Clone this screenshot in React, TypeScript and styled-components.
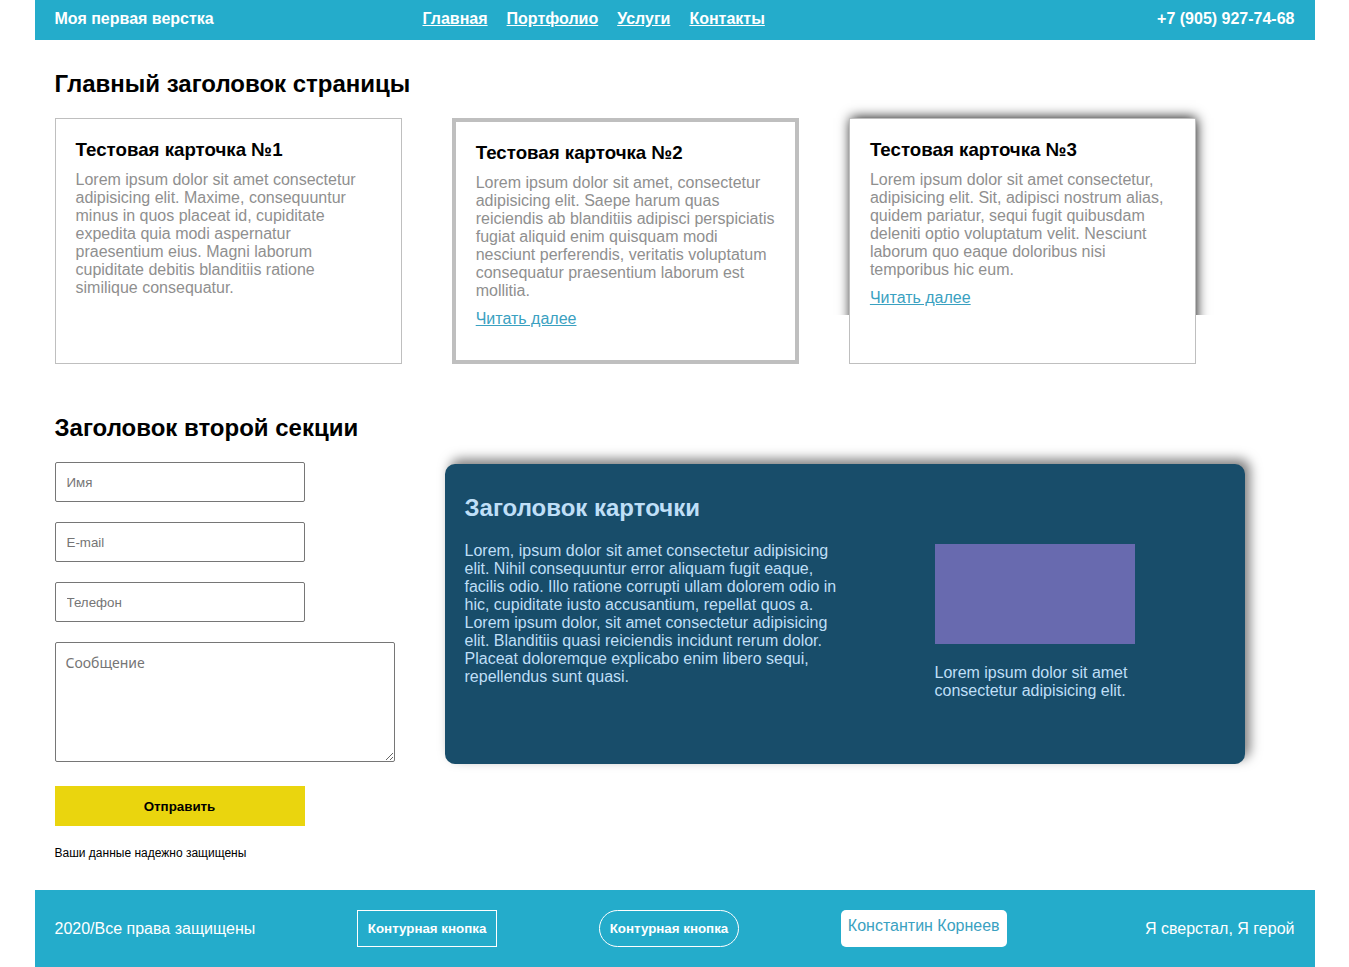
import React from "react";
import styled, { createGlobalStyle, css } from "styled-components";

const sans = `"Liberation Sans", Arial, sans-serif`;
const accent = "#24accb";

const GlobalStyle = createGlobalStyle`
  *, *::before, *::after { box-sizing: border-box; }
  body {
    margin: 0;
    background: #fff;
    color: #000;
    font-family: ${sans};
    font-size: 16px;
    line-height: 18px;
  }
  h2, h3, p { margin: 0; }
`;

const Page = styled.div`
  max-width: 1280px;
  margin: 0 auto;
`;

const Header = styled.header`
  display: grid;
  grid-template-columns: 368px 1fr auto;
  padding: 10px 20px 12px;
  background: ${accent};
  color: #fff;
  font-weight: 700;
`;

const Nav = styled.nav`
  display: flex;
  flex-wrap: wrap;
  gap: 19px;
`;

const NavLink = styled.a`
  color: inherit;
`;

const Section = styled.section<{ $top: number }>`
  padding: ${({ $top }) => $top}px 20px 0;
`;

const Heading = styled.h2`
  margin-bottom: 20px;
  font-size: 24px;
  line-height: 28px;
`;

const Cards = styled.div`
  display: flex;
  gap: 50px;
`;

const Card = styled.article<{ $variant: "thin" | "thick" | "raised" }>`
  position: relative;
  flex: 0 0 28%;
  min-height: 246px;
  padding: 20px;
  background: #fff;
  border: ${({ $variant }) => ($variant === "thick" ? 4 : 1)}px solid #bfbfbf;

  ${({ $variant }) =>
    $variant === "raised" &&
    css`
      &::before {
        content: "";
        position: absolute;
        z-index: -1;
        inset: 0;
        box-shadow: 1px -1px 12px #000;
        clip-path: inset(-20px -20px 48px);
      }
    `}
`;

const CardTitle = styled.h3`
  margin-bottom: 10px;
  line-height: 22px;
`;

const CardText = styled.p`
  color: #8f8f8f;
`;

const MoreLink = styled.a`
  display: inline-block;
  margin-top: 10px;
  color: #3aa1c1;
`;

const Contact = styled.div`
  display: flex;
  align-items: flex-start;
  gap: 50px;
`;

const Form = styled.form`
  display: flex;
  flex: 0 0 340px;
  flex-direction: column;
  align-items: flex-start;
  gap: 20px;
`;

const Field = styled.input`
  width: 250px;
  height: 40px;
  padding: 0 11px;
  border: 1px solid #767676;
  border-radius: 2px;
  font-family: ${sans};
`;

const Message = styled.textarea`
  width: 100%;
  height: 120px;
  margin-bottom: 4px;
  padding: 10px;
  border: 1px solid #767676;
  border-radius: 2px;
  font-family: "Noto Sans", sans-serif;
  font-size: 14px;
`;

const Submit = styled.button`
  width: 250px;
  height: 40px;
  border: 0;
  background: #ead50e;
  color: #000;
  font-family: ${sans};
  font-weight: 700;
`;

const Note = styled.p`
  font-size: 12px;
  line-height: 14px;
`;

const Panel = styled.article`
  display: grid;
  flex: 0 1 800px;
  grid-template-columns: 1fr 1fr;
  min-height: 300px;
  margin-top: 2px;
  padding: 30px 20px;
  border-radius: 10px;
  background: #184d6a;
  box-shadow: 5px -5px 12px rgba(0, 0, 0, 0.5);
  color: #bfdff7;
`;

const Figure = styled.figure`
  width: 200px;
  margin: 50px auto 0;
`;

const Swatch = styled.div`
  height: 100px;
  margin-bottom: 20px;
  background: #686aaf;
`;

const Footer = styled.footer`
  display: flex;
  align-items: center;
  justify-content: space-between;
  margin-top: 30px;
  padding: 20px;
  background: ${accent};
  color: #fff;
`;

const OutlineButton = styled.button<{ $round?: boolean }>`
  width: 140px;
  height: 37px;
  padding: 0;
  border: 1px solid #fff;
  border-radius: ${({ $round }) => ($round ? 20 : 0)}px;
  background: transparent;
  color: #fff;
  font-family: ${sans};
  font-weight: 700;
`;

const Author = styled.div`
  height: 37px;
  padding: 7px;
  border-radius: 5px;
  background: #fff;
  color: #3aa1c1;
`;

const Motto = styled.div`
  width: 186px;
  text-align: right;
`;

const links = ["Главная", "Портфолио", "Услуги", "Контакты"];

export default function App() {
  return (
    <>
      <GlobalStyle />
      <Page>
        <Header>
          <div>Моя первая верстка</div>
          <Nav>
            {links.map((label) => (
              <NavLink key={label} href="#">{label}</NavLink>
            ))}
          </Nav>
          <div>+7 (905) 927-74-68</div>
        </Header>

        <main>
          <Section $top={30}>
            <Heading>Главный заголовок страницы</Heading>
            <Cards>
              <Card $variant="thin">
                <CardTitle>Тестовая карточка №1</CardTitle>
                <CardText>
                  Lorem ipsum dolor sit amet consectetur adipisicing elit. Maxime, consequuntur minus in
                  quos placeat id, cupiditate expedita quia modi aspernatur praesentium eius. Magni
                  laborum cupiditate debitis blanditiis ratione similique consequatur.
                </CardText>
              </Card>
              <Card $variant="thick">
                <CardTitle>Тестовая карточка №2</CardTitle>
                <CardText>
                  Lorem ipsum dolor sit amet, consectetur adipisicing elit. Saepe harum quas reiciendis
                  ab blanditiis adipisci perspiciatis fugiat aliquid enim quisquam modi nesciunt
                  perferendis, veritatis voluptatum consequatur praesentium laborum est mollitia.
                </CardText>
                <MoreLink href="#">Читать далее</MoreLink>
              </Card>
              <Card $variant="raised">
                <CardTitle>Тестовая карточка №3</CardTitle>
                <CardText>
                  Lorem ipsum dolor sit amet consectetur, adipisicing elit. Sit, adipisci nostrum alias,
                  quidem pariatur, sequi fugit quibusdam deleniti optio voluptatum velit. Nesciunt
                  laborum quo eaque doloribus nisi temporibus hic eum.
                </CardText>
                <MoreLink href="#">Читать далее</MoreLink>
              </Card>
            </Cards>
          </Section>

          <Section $top={50}>
            <Heading>Заголовок второй секции</Heading>
            <Contact>
              <Form>
                <Field type="text" placeholder="Имя" aria-label="Имя" />
                <Field type="email" placeholder="E-mail" aria-label="E-mail" />
                <Field type="tel" placeholder="Телефон" aria-label="Телефон" />
                <Message placeholder="Сообщение" aria-label="Сообщение" />
                <Submit type="submit">Отправить</Submit>
                <Note>Ваши данные надежно защищены</Note>
              </Form>
              <Panel>
                <div>
                  <Heading>Заголовок карточки</Heading>
                  <p>
                    Lorem, ipsum dolor sit amet consectetur adipisicing elit. Nihil consequuntur error
                    aliquam fugit eaque, facilis odio. Illo ratione corrupti ullam dolorem odio in hic,
                    cupiditate iusto accusantium, repellat quos a. Lorem ipsum dolor, sit amet
                    consectetur adipisicing elit. Blanditiis quasi reiciendis incidunt rerum dolor.
                    Placeat doloremque explicabo enim libero sequi, repellendus sunt quasi.
                  </p>
                </div>
                <Figure>
                  <Swatch />
                  <figcaption>Lorem ipsum dolor sit amet consectetur adipisicing elit.</figcaption>
                </Figure>
              </Panel>
            </Contact>
          </Section>
        </main>

        <Footer>
          <div>2020/Все права защищены</div>
          <OutlineButton type="button">Контурная кнопка</OutlineButton>
          <OutlineButton type="button" $round>Контурная кнопка</OutlineButton>
          <Author>Константин Корнеев</Author>
          <Motto>Я сверстал, Я герой</Motto>
        </Footer>
      </Page>
    </>
  );
}
